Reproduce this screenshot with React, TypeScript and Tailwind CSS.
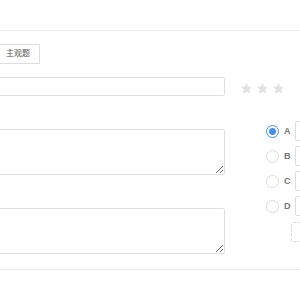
const Star = () => (
  <svg viewBox="0 0 24 24" className="h-[13px] w-[13px] fill-[#e3e3e3]">
    <path d="M12 1.8l3.1 6.6 7.2.9-5.3 5 1.4 7.1L12 17.9l-6.4 3.5 1.4-7.1-5.3-5 7.2-.9z" />
  </svg>
);

function Option({ label, checked }: { label: string; checked?: boolean }) {
  return (
    <div className="flex h-[20px] items-center">
      {checked ? (
        <span className="flex h-[13px] w-[13px] items-center justify-center rounded-full border border-[#4a90e2] bg-white">
          <span className="h-[7px] w-[7px] rounded-full bg-[#4a90e2]" />
        </span>
      ) : (
        <span className="h-[13px] w-[13px] rounded-full border border-[#dcdcdc] bg-white" />
      )}
      <span className="ml-[5px] w-[6px] text-[9px] font-bold leading-none text-[#777]">{label}</span>
      <div className="ml-[5px] h-[20px] w-[40px] shrink-0 rounded-[2px] border border-[#dddddd] bg-white" />
    </div>
  );
}

export default function App() {
  return (
    <div
      className="h-[300px] w-[300px] overflow-hidden bg-white"
      style={{ fontFamily: '"Liberation Sans", "Noto Sans CJK SC", sans-serif' }}
    >
      <div className="h-[31px] border-b border-[#ececec]" />

      <div className="pt-[13px]">
        <button className="-ml-[4px] flex h-[20px] w-[44px] items-center justify-center border border-[#dedede] bg-white text-[8px] text-[#555]">
          主观题
        </button>
      </div>

      <div className="-ml-[20px] flex">
        <div className="flex w-[245px] shrink-0 flex-col">
          <div className="mt-[13px] h-[19px] rounded-[2px] border border-[#dedede] bg-white" />
          <textarea className="mt-[33px] h-[46px] rounded-[2px] border border-[#dedede] bg-white" />
          <textarea className="mt-[33px] h-[46px] rounded-[2px] border border-[#dedede] bg-white" />
        </div>

        <div className="ml-[15px] flex shrink-0 flex-col">
          <div className="mt-[18px] flex gap-[3px]">
            <Star />
            <Star />
            <Star />
          </div>
          <div className="ml-[26px] mt-[26px] flex flex-col gap-[5px]">
            <Option label="A" checked />
            <Option label="B" />
            <Option label="C" />
            <Option label="D" />
            <div className="ml-[25px] mt-[1px] h-[20px] w-[30px] rounded-[2px] border border-dashed border-[#d6d6d6]" />
          </div>
        </div>
      </div>

      <div className="mt-[15px] border-t border-[#ececec]" />
    </div>
  );
}
